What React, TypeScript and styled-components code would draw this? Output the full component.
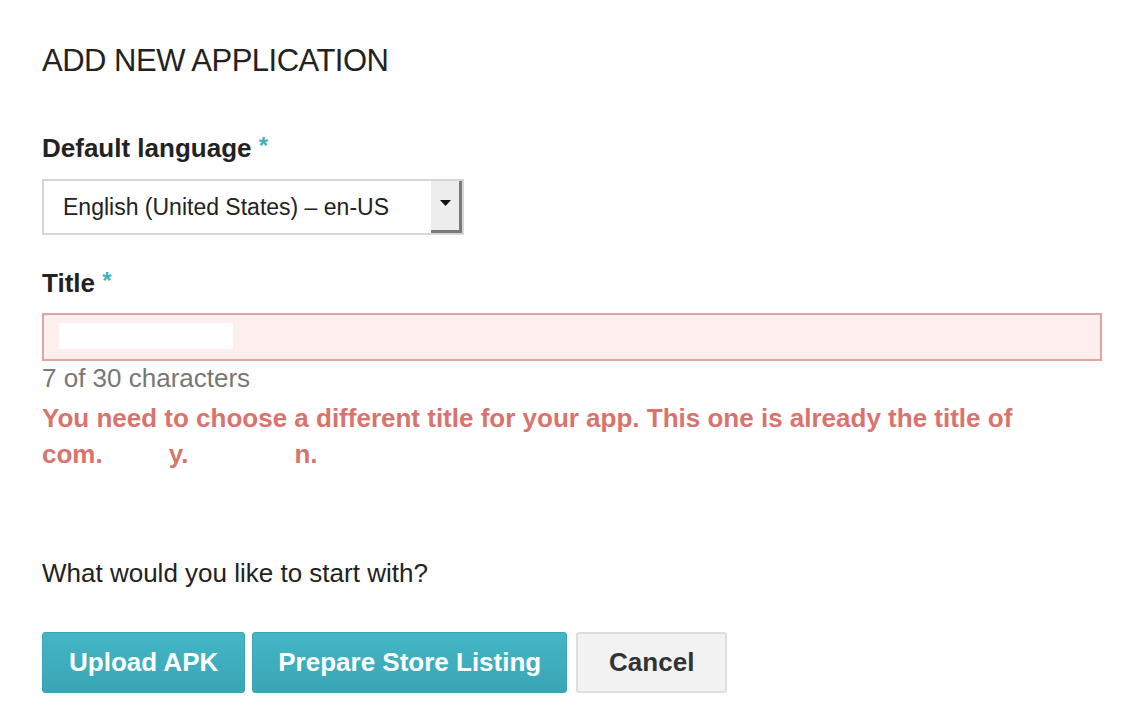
import styled, { createGlobalStyle } from "styled-components";

const GlobalStyle = createGlobalStyle`
  body {
    margin: 0;
    background: #ffffff;
    font-family: "Liberation Sans", Arial, Helvetica, sans-serif;
    color: #222222;
  }
`;

const App = () => {
  return (
    <>
      <GlobalStyle />
      <Page>
        <Heading>ADD NEW APPLICATION</Heading>

        <Label $top={52}>
          Default language <Star>*</Star>
        </Label>
        <Select>
          <SelectText>English (United States) – en-US</SelectText>
          <SelectArrow>
            <svg width="11" height="6" viewBox="0 0 11 6">
              <path d="M0 0 L11 0 L5.5 6 Z" fill="#111" />
            </svg>
          </SelectArrow>
        </Select>

        <Label $top={31}>
          Title <Star>*</Star>
        </Label>
        <TitleInput>
          <Redacted $w={174} $h={26} />
        </TitleInput>
        <Counter>7 of 30 characters</Counter>
        <ErrorText>
          You need to choose a different title for your app. This one is already the title of
          <br />
          com.<Gap $w={66} />y.<Gap $w={106} />n.
        </ErrorText>

        <Question>What would you like to start with?</Question>

        <Buttons>
          <PrimaryButton $pad={26}>Upload APK</PrimaryButton>
          <PrimaryButton $pad={25}>Prepare Store Listing</PrimaryButton>
          <CancelButton>Cancel</CancelButton>
        </Buttons>
      </Page>
    </>
  );
};

export default App;

const Page = styled.div`
  width: 1132px;
  height: 718px;
  box-sizing: border-box;
  padding: 43px 0 0 42px;
  display: flex;
  flex-direction: column;
  align-items: flex-start;
`;

const Heading = styled.h1`
  margin: 0;
  font-size: 31px;
  line-height: 36px;
  font-weight: 400;
  color: #222;
  letter-spacing: -0.5px;
`;

const Label = styled.div<{ $top: number }>`
  margin-top: ${(p) => p.$top}px;
  font-size: 26px;
  line-height: 30px;
  font-weight: 700;
  color: #222;
`;

const Star = styled.span`
  color: #3fb1c0;
  font-size: 24px;
  vertical-align: 3px;
`;

const Select = styled.div`
  margin-top: 16px;
  width: 422px;
  height: 56px;
  box-sizing: border-box;
  border: 2px solid #d6d6d6;
  display: flex;
  align-items: stretch;
  background: #fff;
`;

const SelectText = styled.div`
  flex: 1;
  display: flex;
  align-items: center;
  padding-left: 19px;
  font-size: 23px;
  color: #222;
`;

const SelectArrow = styled.div`
  width: 31px;
  background: #ededed;
  box-shadow: inset -3px -3px 0 #7a7a7a;
  display: flex;
  align-items: center;
  justify-content: center;
  padding-right: 3px;
  padding-bottom: 8px;
  box-sizing: border-box;
`;

const TitleInput = styled.div`
  margin-top: 15px;
  width: 1060px;
  height: 48px;
  box-sizing: border-box;
  border: 2px solid #e0a5a1;
  background: #fcefed;
  padding: 8px 0 0 15px;
`;

const Redacted = styled.div<{ $w: number; $h: number }>`
  width: ${(p) => p.$w}px;
  height: ${(p) => p.$h}px;
  background: #ffffff;
`;

const Counter = styled.div`
  margin-top: 2px;
  font-size: 26px;
  line-height: 30px;
  color: #777;
`;

const ErrorText = styled.div`
  margin-top: 7px;
  width: 1060px;
  font-size: 26px;
  line-height: 36px;
  font-weight: 700;
  color: #d9736d;
`;

const Gap = styled.span<{ $w: number }>`
  display: inline-block;
  width: ${(p) => p.$w}px;
`;

const Question = styled.div`
  margin-top: 86px;
  font-size: 26px;
  line-height: 30px;
  color: #222;
`;

const Buttons = styled.div`
  margin-top: 44px;
  display: flex;
  gap: 7px;
`;

const PrimaryButton = styled.button<{ $pad: number }>`
  height: 61px;
  padding: 0 ${(p) => p.$pad}px;
  border: 1px solid #3aa5b4;
  border-radius: 3px;
  background: linear-gradient(#43b6c6, #3aa6b5);
  color: #fff;
  font-family: "Liberation Sans", Arial, sans-serif;
  font-size: 26px;
  font-weight: 700;
`;

const CancelButton = styled.button`
  margin-left: 2px;
  height: 61px;
  width: 151px;
  border: 2px solid #dedede;
  border-radius: 3px;
  background: #f2f2f2;
  color: #333;
  font-family: "Liberation Sans", Arial, sans-serif;
  font-size: 26px;
  font-weight: 700;
`;
